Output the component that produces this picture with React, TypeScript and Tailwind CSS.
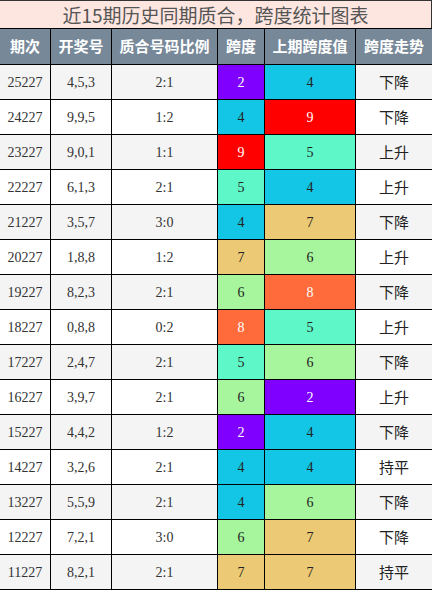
const C: Record<string, string> = {
  2: 'bg-[#7f00ff] text-white',
  4: 'bg-[#13c6e6] text-[#222]',
  9: 'bg-[#ff0000] text-white',
  5: 'bg-[#5ef7c8] text-[#222]',
  7: 'bg-[#ecc974] text-[#222]',
  6: 'bg-[#a7f59d] text-[#222]',
  8: 'bg-[#ff6b3b] text-white',
}

const rows: [string, string, string, number, number, string][] = [
  ['25227', '4,5,3', '2:1', 2, 4, '下降'],
  ['24227', '9,9,5', '1:2', 4, 9, '下降'],
  ['23227', '9,0,1', '1:1', 9, 5, '上升'],
  ['22227', '6,1,3', '2:1', 5, 4, '上升'],
  ['21227', '3,5,7', '3:0', 4, 7, '下降'],
  ['20227', '1,8,8', '1:2', 7, 6, '上升'],
  ['19227', '8,2,3', '2:1', 6, 8, '下降'],
  ['18227', '0,8,8', '0:2', 8, 5, '上升'],
  ['17227', '2,4,7', '2:1', 5, 6, '下降'],
  ['16227', '3,9,7', '2:1', 6, 2, '上升'],
  ['15227', '4,4,2', '1:2', 2, 4, '下降'],
  ['14227', '3,2,6', '2:1', 4, 4, '持平'],
  ['13227', '5,5,9', '2:1', 4, 6, '下降'],
  ['12227', '7,2,1', '3:0', 6, 7, '下降'],
  ['11227', '8,2,1', '2:1', 7, 7, '持平'],
]

const heads = ['期次', '开奖号', '质合号码比例', '跨度', '上期跨度值', '跨度走势']
const cjk = "font-['Noto_Sans_CJK_SC',sans-serif]"
const serif = "font-['Liberation_Serif',serif]"

export default function App() {
  return (
    <div className="w-[432px] h-[591px] bg-white overflow-hidden">
      <div className="-ml-px w-[433px]">
        <div className={`h-[29px] border border-[#333] bg-[#fee6e0] text-[#555] text-[19px] leading-[27px] text-center ${cjk}`}>
          近15期历史同期质合，跨度统计图表
        </div>
        <table className="w-[433px] table-fixed border-collapse -mt-px">
          <colgroup>
            <col className="w-[51px]" />
            <col className="w-[61px]" />
            <col className="w-[106px]" />
            <col className="w-[47px]" />
            <col className="w-[91px]" />
            <col className="w-[77px]" />
          </colgroup>
          <thead>
            <tr className="h-[36px] bg-[#778899]">
              {heads.map(h => (
                <th key={h} className={`border border-black p-0 text-white text-[15px] font-bold ${cjk}`}>{h}</th>
              ))}
            </tr>
          </thead>
          <tbody>
            {rows.map((r, i) => (
              <tr key={r[0]} className={`h-[35px] ${i % 2 === 0 ? 'bg-[#f4f4f4]' : 'bg-white'}`}>
                <td className={`border border-black p-0 text-center text-[14px] text-[#333] ${serif}`}>{r[0]}</td>
                <td className={`border border-black p-0 text-center text-[14px] text-[#333] ${serif}`}>{r[1]}</td>
                <td className={`border border-black p-0 text-center text-[14px] text-[#333] ${serif}`}>{r[2]}</td>
                <td className={`border border-black p-0 text-center text-[14px] ${serif} ${C[r[3]]}`}>{r[3]}</td>
                <td className={`border border-black p-0 text-center text-[14px] ${serif} ${C[r[4]]}`}>{r[4]}</td>
                <td className={`border border-black p-0 text-center text-[15px] text-[#222] ${cjk}`}>{r[5]}</td>
              </tr>
            ))}
          </tbody>
        </table>
      </div>
    </div>
  )
}
